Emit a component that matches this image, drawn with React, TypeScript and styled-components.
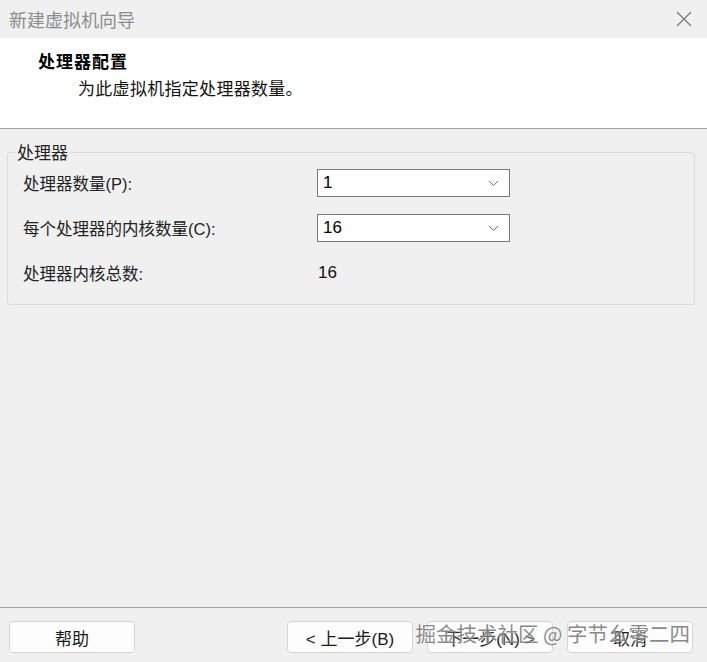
import React from 'react';
import styled, { createGlobalStyle } from 'styled-components';

const GlobalStyle = createGlobalStyle`
	html, body {
		margin: 0;
		padding: 0;
		background: #f0f0f0;
		overflow: hidden;
	}
	body {
		font-family: 'Liberation Sans', 'Noto Sans CJK SC', sans-serif;
	}
`;

const Dialog = styled.div`
	position: relative;
	width: 707px;
	height: 662px;
	display: flex;
	flex-direction: column;
	background: #f0f0f0;
	color: #000;
`;

const TitleBar = styled.div`
	height: 38px;
	display: flex;
	align-items: center;
	justify-content: space-between;
	padding: 0 15px 0 9px;
	background: #f0f0f0;
`;

const TitleText = styled.span`
	font-size: 18px;
	color: #8c8c8c;
	font-family: 'Noto Sans CJK SC', sans-serif;
`;

const Header = styled.div`
	height: 91px;
	background: #fff;
	border-bottom: 1px solid #a6a6a6;
	padding: 11px 0 0 38px;
	box-sizing: border-box;
`;

const HeaderTitle = styled.div`
	font-size: 17px;
	font-weight: bold;
	letter-spacing: 1px;
	font-family: 'Noto Sans CJK SC', serif;
	line-height: 24px;
`;

const HeaderSub = styled.div`
	font-size: 17px;
	letter-spacing: 0.3px;
	margin: 3px 0 0 40px;
	line-height: 24px;
	font-family: 'Noto Sans CJK SC', serif;
	color: #111;
`;

const Body = styled.div`
	flex: 1;
	padding: 13px 12px 0 7px;
`;

const Group = styled.fieldset`
	margin: 0;
	padding: 4px 0 10px 15px;
	height: 163px;
	box-sizing: border-box;
	border: 1px solid #dcdcdc;
	border-radius: 3px;
`;

const Legend = styled.legend`
	font-size: 17px;
	padding: 0 2px;
	margin-left: -8px;
	color: #222;
	line-height: 20px;
	font-family: 'Noto Sans CJK SC', sans-serif;
`;

const Grid = styled.div`
	display: grid;
	grid-template-columns: 294px 193px;
	grid-auto-rows: 28px;
	row-gap: 17px;
	align-items: center;
	margin-top: 3px;
`;

const Label = styled.span`
	font-size: 16.5px;
	color: #222;
`;

const Value = styled.span`
	font-size: 17px;
	padding-left: 1px;
	color: #111;
`;

const Select = styled.div`
	height: 28px;
	box-sizing: border-box;
	border: 1px solid #7a7a7a;
	background: #fff;
	display: flex;
	align-items: center;
	justify-content: space-between;
	padding: 0 10px 0 5px;
	font-size: 17px;
	color: #000;
`;

const Footer = styled.div`
	height: 55px;
	border-top: 1px solid #a6a6a6;
	box-sizing: border-box;
	display: flex;
	align-items: flex-start;
	padding: 13px 14px 0 9px;
	gap: 14px;
`;

const Spacer = styled.div`
	flex: 1;
`;

const Button = styled.button`
	width: 126px;
	height: 32px;
	background: #fdfdfd;
	border: 1px solid #d4d4d4;
	border-radius: 4px;
	font-size: 17px;
	color: #1a1a1a;
	font-family: 'Liberation Sans', 'Noto Sans CJK SC', sans-serif;
	padding: 0;
`;

const Watermark = styled.div`
	position: absolute;
	right: 17px;
	bottom: 14px;
	font-size: 20.5px;
	color: rgba(105, 105, 105, 0.78);
	font-family: 'Noto Sans CJK SC', sans-serif;
	text-shadow: 0 0 2px #fff;
	pointer-events: none;
`;

const Chevron = () => (
	<svg width="11" height="7" viewBox="0 0 11 7">
		<path d="M1 1 L5.5 5.5 L10 1" fill="none" stroke="#6e6e6e" strokeWidth="1" />
	</svg>
);

const CloseIcon = () => (
	<svg width="16" height="16" viewBox="0 0 16 16">
		<path d="M1 1 L15 15 M15 1 L1 15" stroke="#7a7a7a" strokeWidth="1.3" />
	</svg>
);

const rows = [
	{ label: '处理器数量(P):', value: '1', select: true },
	{ label: '每个处理器的内核数量(C):', value: '16', select: true },
	{ label: '处理器内核总数:', value: '16', select: false },
];

const App = () => {
	return (
		<Dialog>
			<GlobalStyle />
			<TitleBar>
				<TitleText>新建虚拟机向导</TitleText>
				<CloseIcon />
			</TitleBar>
			<Header>
				<HeaderTitle>处理器配置</HeaderTitle>
				<HeaderSub>为此虚拟机指定处理器数量。</HeaderSub>
			</Header>
			<Body>
				<Group>
					<Legend>处理器</Legend>
					<Grid>
						{rows.map((r, idx) => (
							<React.Fragment key={idx}>
								<Label>{r.label}</Label>
								{r.select ? (
									<Select>
										<span>{r.value}</span>
										<Chevron />
									</Select>
								) : (
									<Value>{r.value}</Value>
								)}
							</React.Fragment>
						))}
					</Grid>
				</Group>
			</Body>
			<Footer>
				<Button>帮助</Button>
				<Spacer />
				<Button>&lt; 上一步(B)</Button>
				<Button>下一步(N) &gt;</Button>
				<Button>取消</Button>
			</Footer>
			<Watermark>掘金技术社区 @ 字节幺零二四</Watermark>
		</Dialog>
	);
};

export default App;
